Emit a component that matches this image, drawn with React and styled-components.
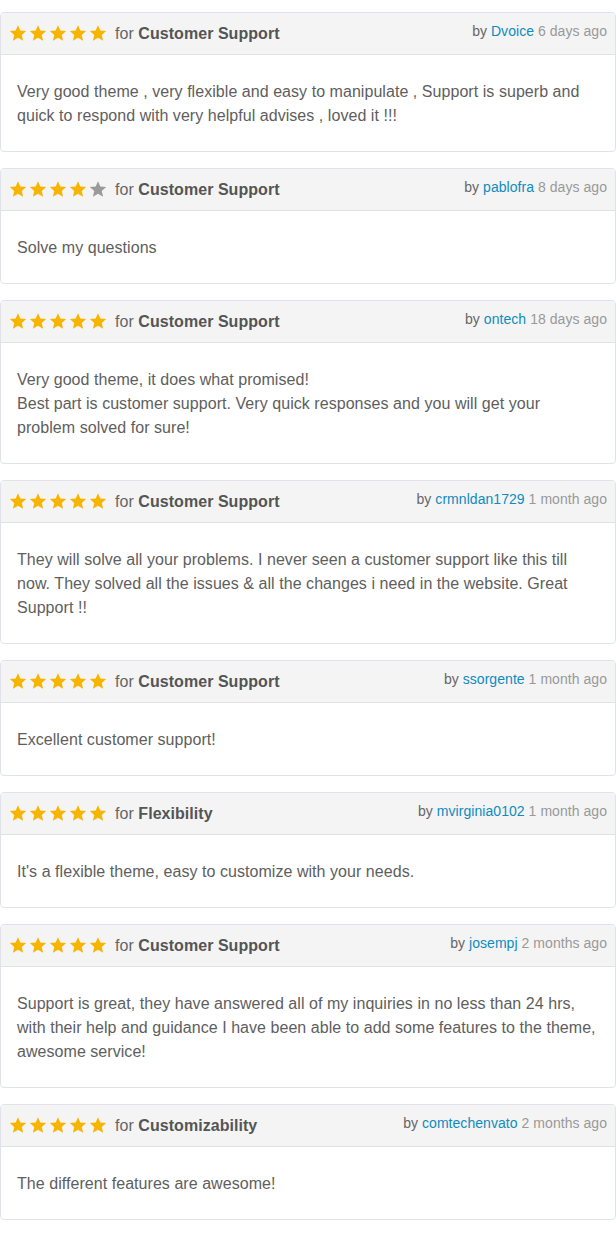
import React from "react";
import styled, { createGlobalStyle } from "styled-components";

const Global = createGlobalStyle`
  html, body { margin: 0; padding: 0; background: #fff; }
  body { font-family: "Liberation Sans", Arial, Helvetica, sans-serif; }
`;

const List = styled.div`
  display: flex;
  flex-direction: column;
  gap: 16px;
  padding: 12px 0 14px;
`;

const Card = styled.div`
  border: 1px solid #dfe3e7;
  border-radius: 4px;
  background: #fff;
  overflow: hidden;
`;

const Header = styled.div`
  display: flex;
  align-items: center;
  justify-content: space-between;
  height: 41px;
  padding: 0 8px;
  background: #f4f4f4;
  border-bottom: 1px solid #dfe3e7;
`;

const Left = styled.div`
  display: flex;
  align-items: center;
`;

const Stars = styled.div`
  display: flex;
  gap: 2px;
  margin-right: 8px;
  margin-top: -1px;
`;

const Category = styled.span`
  font-size: 16px;
  color: #666;
  letter-spacing: 0.05px;
  b { font-weight: 700; color: #555; }
`;

const Meta = styled.div`
  font-size: 14px;
  color: #666;
  margin-top: -6px;
  letter-spacing: 0.05px;
`;

const Author = styled.a`
  color: #0f8bbf;
  text-decoration: none;
`;

const When = styled.span`
  color: #999;
`;

const Body = styled.div`
  padding: 25px 16px 23px;
  font-size: 16px;
  line-height: 24px;
  letter-spacing: 0.05px;
  color: #5e5e5e;
`;

const Star = ({ on }) => (
  <svg width="18" height="18" viewBox="0 0 24 24">
    <path
      d="M12 1.5l3.1 7.2 7.8.7-5.9 5.2 1.8 7.7L12 18.2l-6.8 4.1 1.8-7.7L1.1 9.4l7.8-.7z"
      fill={on ? "#f7b500" : "#9a9a9a"}
    />
  </svg>
);

const reviews = [
  { r: 5, cat: "Customer Support", by: "Dvoice", when: "6 days ago", text: ["Very good theme , very flexible and easy to manipulate , Support is superb and quick to respond with very helpful advises , loved it !!!"] },
  { r: 4, cat: "Customer Support", by: "pablofra", when: "8 days ago", text: ["Solve my questions"] },
  { r: 5, cat: "Customer Support", by: "ontech", when: "18 days ago", text: ["Very good theme, it does what promised!", "Best part is customer support. Very quick responses and you will get your problem solved for sure!"] },
  { r: 5, cat: "Customer Support", by: "crmnldan1729", when: "1 month ago", text: ["They will solve all your problems. I never seen a customer support like this till now. They solved all the issues & all the changes i need in the website. Great Support !!"] },
  { r: 5, cat: "Customer Support", by: "ssorgente", when: "1 month ago", text: ["Excellent customer support!"] },
  { r: 5, cat: "Flexibility", by: "mvirginia0102", when: "1 month ago", text: ["It's a flexible theme, easy to customize with your needs."] },
  { r: 5, cat: "Customer Support", by: "josempj", when: "2 months ago", text: ["Support is great, they have answered all of my inquiries in no less than 24 hrs, with their help and guidance I have been able to add some features to the theme, awesome service!"] },
  { r: 5, cat: "Customizability", by: "comtechenvato", when: "2 months ago", text: ["The different features are awesome!"] },
];

export default function App() {
  return (
    <>
      <Global />
      <List>
        {reviews.map((rv, i) => (
          <Card key={i}>
            <Header>
              <Left>
                <Stars>
                  {[0, 1, 2, 3, 4].map((k) => (
                    <Star key={k} on={k < rv.r} />
                  ))}
                </Stars>
                <Category>
                  for <b>{rv.cat}</b>
                </Category>
              </Left>
              <Meta>
                by <Author href="#">{rv.by}</Author> <When>{rv.when}</When>
              </Meta>
            </Header>
            <Body>
              {rv.text.map((t, j) => (
                <React.Fragment key={j}>
                  {j > 0 && <br />}
                  {t}
                </React.Fragment>
              ))}
            </Body>
          </Card>
        ))}
      </List>
    </>
  );
}
